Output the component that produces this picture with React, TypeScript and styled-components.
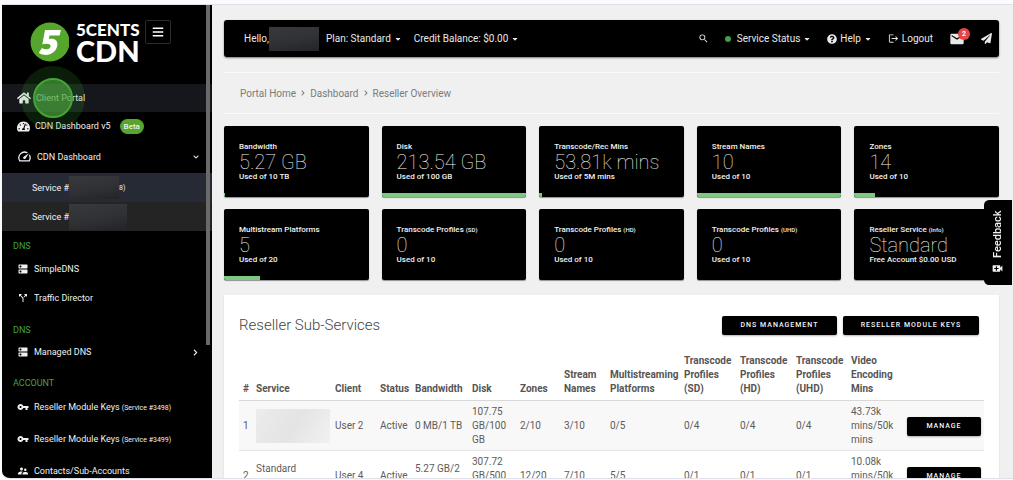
import React from "react";
import styled, { createGlobalStyle } from "styled-components";
import { FaHome, FaQuestionCircle, FaPaperPlane, FaCaretDown, FaBars, FaTachometerAlt, FaChevronRight, FaChevronDown } from "react-icons/fa";
import { MdDns, MdCallSplit, MdVpnKey, MdSupervisorAccount, MdSearch, MdEmail, MdVideoCall, MdSpeed, MdLogout } from "react-icons/md";

const GlobalStyle = createGlobalStyle`
  *, *::before, *::after { box-sizing: border-box; }
  html, body, #root { height: 100%; margin: 0; }
  body { background: #fff; overflow: hidden; font-family: Roboto, "Liberation Sans", sans-serif; font-size: 10px; color: #5c5c5c; }
  a { color: inherit; text-decoration: none; }
  button { font: inherit; border: 0; padding: 0; color: inherit; background: none; cursor: pointer; }
  svg { flex: none; display: block; }
`;

const Shell = styled.div`
  height: 100vh;
  padding: 4px 0 1px 2px;
  background: #fbfbfd;
`;
const Frame = styled.div`
  display: flex;
  height: 100%;
  overflow: hidden;
  border: solid #dfe1e8;
  border-width: 1px 0;
  border-bottom-left-radius: 8px;
  background: #f0f0f0;
`;

/* Sidebar */
const Sidebar = styled.aside`
  position: relative;
  width: 210px;
  flex: none;
  overflow: hidden;
  background: #000;
  color: #f0f0f0;
`;
const ScrollThumb = styled.div`
  position: absolute;
  top: 0;
  right: 2px;
  width: 4px;
  height: 340px;
  background: #6a6a6a;
`;
const Brand = styled.div`
  display: flex;
  align-items: flex-start;
  height: 79px;
  padding: 15px 0 0 28px;
`;
const BrandLink = styled.a`
  display: flex;
  gap: 7px;
  color: #fff;
  font-family: Lato, sans-serif;
  font-weight: 900;
`;
const Words = styled.span`
  display: flex;
  flex-direction: column;
  padding-top: 2px;
`;
const Small = styled.span`
  font-size: 17px;
  line-height: 16px;
`;
const Big = styled.span`
  font-size: 29px;
  line-height: 26px;
`;
const MenuButton = styled.button`
  display: grid;
  place-items: center;
  width: 26px;
  height: 24px;
  margin-left: 5px;
  border: 1px solid #2c2c2c;
  border-radius: 2px;
  color: #fff;
`;
const NavLink = styled.a<{ $h: number; $bg?: string; $sub?: boolean }>`
  display: flex;
  align-items: center;
  gap: 5px;
  height: ${(p) => p.$h}px;
  padding: 0 13px 0 ${(p) => (p.$sub ? 30 : 15)}px;
  background: ${(p) => p.$bg ?? "transparent"};
  font-size: 9px;
  white-space: nowrap;
  small { font-size: 7px; }
  svg:last-child:not(:first-child) { margin-left: auto; }
`;
const Heading = styled.h2<{ $h: number; $top?: number }>`
  display: flex;
  align-items: center;
  height: ${(p) => p.$h}px;
  margin: ${(p) => p.$top ?? 0}px 0 0;
  padding-left: 11px;
  font-size: 9px;
  font-weight: 400;
  color: #43a047;
`;
const Beta = styled.span`
  margin-left: 4px;
  padding: 0 4px;
  border-radius: 8px;
  background: #56a52c;
  font-size: 8px;
  font-weight: 500;
  line-height: 15px;
`;
const Smudge = styled.span<{ $w: number; $h: number; $light?: boolean }>`
  width: ${(p) => p.$w}px;
  height: ${(p) => p.$h}px;
  flex: none;
  display: block;
  background: ${(p) => (p.$light ? "linear-gradient(120deg, #ececec, #e4e4e4 50%, #f1f1f1)" : "linear-gradient(170deg, #38393c, #303134 55%, #232427)")};
`;
const Redacted = styled.span`
  display: flex;
  align-items: center;
`;
const Pulse = styled.div`
  position: absolute;
  left: 19px;
  top: 61px;
  width: 64px;
  height: 64px;
  border-radius: 50%;
  background: rgba(60, 170, 50, 0.17);
  pointer-events: none;
  &::after {
    content: "";
    position: absolute;
    inset: 12px;
    border-radius: 50%;
    border: 2px solid #43a535;
    background: rgba(76, 165, 62, 0.66);
  }
`;

/* Main column */
const Main = styled.main`
  flex: 1;
  min-width: 0;
  padding: 15px 14px 0 12px;
`;
const TopBar = styled.header`
  display: flex;
  justify-content: space-between;
  align-items: center;
  height: 37px;
  padding: 0 7px 0 20px;
  border-radius: 3px;
  background: #000;
  color: #e8e8e8;
  box-shadow: 0 1px 2px rgba(0, 0, 0, 0.5);
  font-size: 10px;
  white-space: nowrap;
`;
const Group = styled.div<{ $gap: number }>`
  display: flex;
  align-items: center;
  gap: ${(p) => p.$gap}px;
`;
const BarButton = styled.button`
  position: relative;
  display: flex;
  align-items: center;
  gap: 3px;
`;
const Dot = styled.span`
  width: 6px;
  height: 6px;
  margin-right: 3px;
  border-radius: 50%;
  background: #43a047;
`;
const Count = styled.span`
  position: absolute;
  top: -3px;
  right: -5px;
  width: 12px;
  height: 12px;
  border-radius: 50%;
  background: #e84545;
  color: #fff;
  font-size: 7px;
  font-weight: 700;
  line-height: 12px;
  text-align: center;
`;
const Crumbs = styled.nav`
  display: flex;
  align-items: center;
  gap: 4px;
  height: 42px;
  margin: 15px 0 12px;
  padding-left: 16px;
  border: solid #fafafa;
  border-width: 1px 0;
  font-size: 10px;
  color: #7b7b7b;
`;
const Cards = styled.section`
  display: grid;
  grid-template-columns: repeat(5, 1fr);
  gap: 12px 13px;
`;
const Card = styled.article`
  position: relative;
  height: 71px;
  padding: 16px 15px 0;
  border-radius: 2px;
  overflow: hidden;
  background: #000;
  color: #f2f2f2;
  box-shadow: 0 1px 1px rgba(0, 0, 0, 0.4);
  font-size: 8px;
  font-weight: 500;
  line-height: 10px;
  white-space: nowrap;
  small { font-size: 6px; }
`;
const Value = styled.div`
  font-size: 20px;
  font-weight: 100;
  line-height: 20px;
`;
const Meter = styled.div`
  position: absolute;
  left: 0;
  bottom: 0;
  height: 4px;
  background: #81c784;
`;
const Panel = styled.section`
  margin-top: 15px;
  padding: 20px 15px;
  background: #fff;
  box-shadow: 0 1px 2px rgba(0, 0, 0, 0.1);
`;
const PanelHead = styled.div`
  display: flex;
  justify-content: space-between;
  align-items: center;
  height: 20px;
  padding-right: 5px;
`;
const Title = styled.h1`
  margin: 0;
  font-size: 15px;
  font-weight: 300;
  line-height: 20px;
  color: #444;
`;
const Button = styled.button<{ $w: number }>`
  width: ${(p) => p.$w}px;
  height: 19px;
  border-radius: 2px;
  background: #000;
  color: #f5f5f5;
  box-shadow: 0 1px 2px rgba(0, 0, 0, 0.3);
  font-size: 7px;
  font-weight: 500;
  letter-spacing: 1px;
  white-space: nowrap;
`;
const Table = styled.table`
  width: 100%;
  margin-top: 19px;
  table-layout: fixed;
  border-collapse: collapse;
  font-size: 10px;
  line-height: 14px;
  text-align: left;
  th { padding: 0 0 4px 4px; vertical-align: bottom; font-weight: 700; border-bottom: 1px solid #d8d8d8; color: #555; }
  td { padding: 4px 0 3px 4px; border-bottom: 1px solid #e4e4e4; }
  tbody tr:nth-child(odd) { background: #f8f8f8; }
`;
const Feedback = styled.button`
  position: fixed;
  top: 200px;
  right: 1px;
  display: flex;
  align-items: center;
  gap: 4px;
  height: 85px;
  width: 28px;
  padding: 0;
  justify-content: center;
  writing-mode: vertical-rl;
  transform: rotate(180deg);
  border-radius: 0 5px 5px 0;
  background: #000;
  color: #f2f2f2;
  font-size: 11px;
  font-weight: 500;
  svg { transform: rotate(180deg); }
`;

const cards: { label: string; note?: string; value: string; sub: string; used: number }[] = [
  { label: "Bandwidth", value: "5.27 GB", sub: "Used of 10 TB", used: 1 },
  { label: "Disk", value: "213.54 GB", sub: "Used of 100 GB", used: 100 },
  { label: "Transcode/Rec Mins", value: "53.81k mins", sub: "Used of 5M mins", used: 2 },
  { label: "Stream Names", value: "10", sub: "Used of 10", used: 100 },
  { label: "Zones", value: "14", sub: "Used of 10", used: 14 },
  { label: "Multistream Platforms", value: "5", sub: "Used of 20", used: 25 },
  { label: "Transcode Profiles", note: "(SD)", value: "0", sub: "Used of 10", used: 0 },
  { label: "Transcode Profiles", note: "(HD)", value: "0", sub: "Used of 10", used: 0 },
  { label: "Transcode Profiles", note: "(UHD)", value: "0", sub: "Used of 10", used: 0 },
  { label: "Reseller Service", note: "(Info)", value: "Standard", sub: "Free Account $0.00 USD", used: 0 },
];

const columns: [string, number][] = [
  ["#", 13], ["Service", 79], ["Client", 45], ["Status", 35], ["Bandwidth", 57], ["Disk", 48], ["Zones", 44],
  ["Stream Names", 46], ["Multistreaming Platforms", 74], ["Transcode Profiles (SD)", 56],
  ["Transcode Profiles (HD)", 56], ["Transcode Profiles (UHD)", 55], ["Video Encoding Mins", 56], ["", 81],
];
const totalWidth = columns.reduce((sum, c) => sum + c[1], 0);

const rows: React.ReactNode[][] = [
  ["1", <Smudge key="s" $w={74} $h={34} $light />, "User 2", "Active", "0 MB/1 TB", "107.75 GB/100 GB", "2/10", "3/10", "0/5", "0/4", "0/4", "0/4", "43.73k mins/50k mins"],
  ["2", <>Standard<br />Service</>, "User 4", "Active", "5.27 GB/2 TB", "307.72 GB/500 GB", "12/20", "7/10", "5/5", "0/1", "0/1", "0/1", "10.08k mins/50k mins"],
];

const Logo = () => (
  <svg width="39" height="44" viewBox="0 0 39 44" aria-hidden="true">
    <circle cx="20" cy="22" r="19.5" fill="#56a52c" />
    <path fill="#fff" d="M15 10H31L29.600 15.500H19.500L18.800 19C24.500 17.800 28.200 20.500 27.300 25.500C26.300 31.500 21 35.500 14.500 34.800C12.200 34.600 10.200 33.900 8.800 32.700L12 28C14.500 30 19.500 30 20.500 26.700C21.300 23.500 17.500 23 12.300 24.300Z" />
  </svg>
);

export default function App() {
  return (
    <Shell>
      <GlobalStyle />
      <Frame>
        <Sidebar>
          <Brand>
            <BrandLink href="#home">
              <Logo />
              <Words><Small>5CENTS</Small><Big>CDN</Big></Words>
            </BrandLink>
            <MenuButton aria-label="Toggle menu"><FaBars size={12} /></MenuButton>
          </Brand>
          <nav>
            <NavLink href="#portal" $h={28} $bg="#15171c"><FaHome size={14} />Client Portal</NavLink>
            <NavLink href="#v5" $h={28}><FaTachometerAlt size={13} />CDN Dashboard v5<Beta>Beta</Beta></NavLink>
            <NavLink href="#cdn" $h={33}><MdSpeed size={15} />CDN Dashboard<FaChevronDown size={6} /></NavLink>
            <NavLink href="#s1" $h={29} $bg="#252a35" $sub><Redacted>Service #<Smudge $w={50} $h={23} /><small>8)</small></Redacted></NavLink>
            <NavLink href="#s2" $h={29} $bg="#242424" $sub><Redacted>Service #<Smudge $w={58} $h={26} /></Redacted></NavLink>
            <Heading $h={29}>DNS</Heading>
            <NavLink href="#simple" $h={18}><MdDns size={12} />SimpleDNS</NavLink>
            <NavLink href="#traffic" $h={40}><MdCallSplit size={12} />Traffic Director</NavLink>
            <Heading $h={24}>DNS</Heading>
            <NavLink href="#managed" $h={20}><MdDns size={12} />Managed DNS<FaChevronRight size={7} /></NavLink>
            <Heading $h={16} $top={13}>ACCOUNT</Heading>
            <NavLink href="#k1" $h={32}><MdVpnKey size={12} /><span>Reseller Module Keys <small>(Service #3498)</small></span></NavLink>
            <NavLink href="#k2" $h={32}><MdVpnKey size={12} /><span>Reseller Module Keys <small>(Service #3499)</small></span></NavLink>
            <NavLink href="#contacts" $h={32}><MdSupervisorAccount size={12} />Contacts/Sub-Accounts</NavLink>
          </nav>
          <ScrollThumb />
          <Pulse />
        </Sidebar>
        <Main>
          <TopBar>
            <Group $gap={7}>
              <Redacted>Hello,<Smudge $w={50} $h={24} /></Redacted>
              <Group $gap={12}>
                <BarButton>Plan: Standard<FaCaretDown size={8} /></BarButton>
                <BarButton>Credit Balance: $0.00<FaCaretDown size={8} /></BarButton>
              </Group>
            </Group>
            <Group $gap={16}>
              <BarButton aria-label="Search"><MdSearch size={11} /></BarButton>
              <BarButton><Dot />Service Status<FaCaretDown size={8} /></BarButton>
              <BarButton><FaQuestionCircle size={10} />Help<FaCaretDown size={8} /></BarButton>
              <BarButton><MdLogout size={11} />Logout</BarButton>
              <BarButton aria-label="Messages"><MdEmail size={16} /><Count>2</Count></BarButton>
              <BarButton aria-label="Send"><FaPaperPlane size={11} /></BarButton>
            </Group>
          </TopBar>
          <Crumbs aria-label="Breadcrumb">
            <a href="#home">Portal Home</a><FaChevronRight size={6} />
            <a href="#dash">Dashboard</a><FaChevronRight size={6} />
            <span>Reseller Overview</span>
          </Crumbs>
          <Cards>
            {cards.map((c, i) => (
              <Card key={i}>
                <div>{c.label} {c.note && <small>{c.note}</small>}</div>
                <Value>{c.value}</Value>
                <div>{c.sub}</div>
                {c.used > 0 && <Meter style={{ width: `${c.used}%` }} />}
              </Card>
            ))}
          </Cards>
          <Panel>
            <PanelHead>
              <Title>Reseller Sub-Services</Title>
              <Group $gap={6}>
                <Button $w={115}>DNS MANAGEMENT</Button>
                <Button $w={136}>RESELLER MODULE KEYS</Button>
              </Group>
            </PanelHead>
            <Table>
              <colgroup>
                {columns.map(([name, w], i) => <col key={name + i} style={{ width: `${(w / totalWidth) * 100}%` }} />)}
              </colgroup>
              <thead>
                <tr>{columns.map(([name], i) => <th key={i} scope="col">{name}</th>)}</tr>
              </thead>
              <tbody>
                {rows.map((r, i) => (
                  <tr key={i}>
                    {r.map((cell, j) => <td key={j}>{cell}</td>)}
                    <td><Button $w={74}>MANAGE</Button></td>
                  </tr>
                ))}
              </tbody>
            </Table>
          </Panel>
        </Main>
      </Frame>
      <Feedback><MdVideoCall size={13} />Feedback</Feedback>
    </Shell>
  );
}
